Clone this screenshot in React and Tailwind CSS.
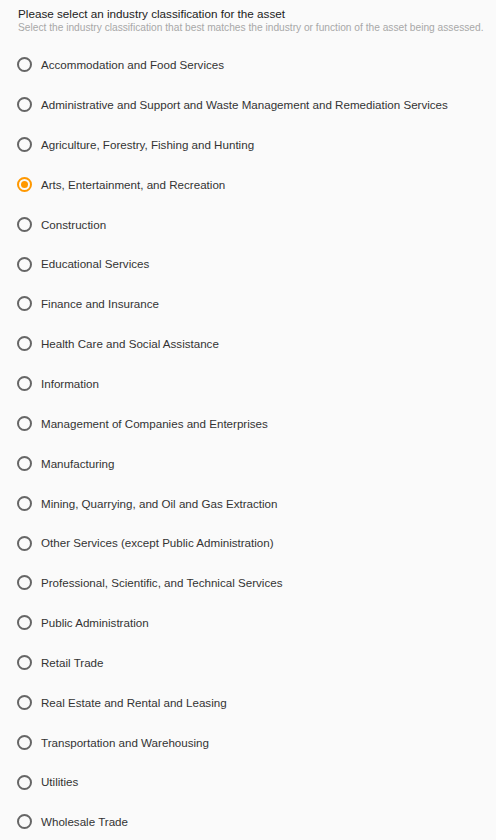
import { useState } from "react";

const industries = [
  "Accommodation and Food Services",
  "Administrative and Support and Waste Management and Remediation Services",
  "Agriculture, Forestry, Fishing and Hunting",
  "Arts, Entertainment, and Recreation",
  "Construction",
  "Educational Services",
  "Finance and Insurance",
  "Health Care and Social Assistance",
  "Information",
  "Management of Companies and Enterprises",
  "Manufacturing",
  "Mining, Quarrying, and Oil and Gas Extraction",
  "Other Services (except Public Administration)",
  "Professional, Scientific, and Technical Services",
  "Public Administration",
  "Retail Trade",
  "Real Estate and Rental and Leasing",
  "Transportation and Warehousing",
  "Utilities",
  "Wholesale Trade",
];

function Radio({ checked }) {
  return (
    <span
      className={
        "flex items-center justify-center w-[15px] h-[15px] rounded-full border-2 shrink-0 " +
        (checked ? "border-[#ff9800]" : "border-[#666666]")
      }
    >
      {checked && <span className="w-[7px] h-[7px] rounded-full bg-[#ff9800]"></span>}
    </span>
  );
}

export default function App() {
  const [selected, setSelected] = useState(industries[3]);

  return (
    <div className="min-h-screen bg-[#fafafa] font-['Liberation_Sans',Arial,sans-serif] pt-[6px]">
      <div className="pl-[18px] pr-[4px]">
        <div className="text-[11.7px] leading-[15px] text-[#222222]">
          Please select an industry classification for the asset
        </div>
        <div className="text-[10.2px] leading-[14px] text-[#a8a8a8] whitespace-nowrap">
          Select the industry classification that best matches the industry or function of the asset being assessed.
        </div>
      </div>
      <div className="mt-[10px] pl-[17px]">
        {industries.map((name) => (
          <label
            key={name}
            className="flex items-center h-[39.85px] cursor-pointer"
            onClick={() => setSelected(name)}
          >
            <Radio checked={selected == name} />
            <span className="ml-[9px] text-[11.6px] text-[#333333]">{name}</span>
          </label>
        ))}
      </div>
    </div>
  );
}
